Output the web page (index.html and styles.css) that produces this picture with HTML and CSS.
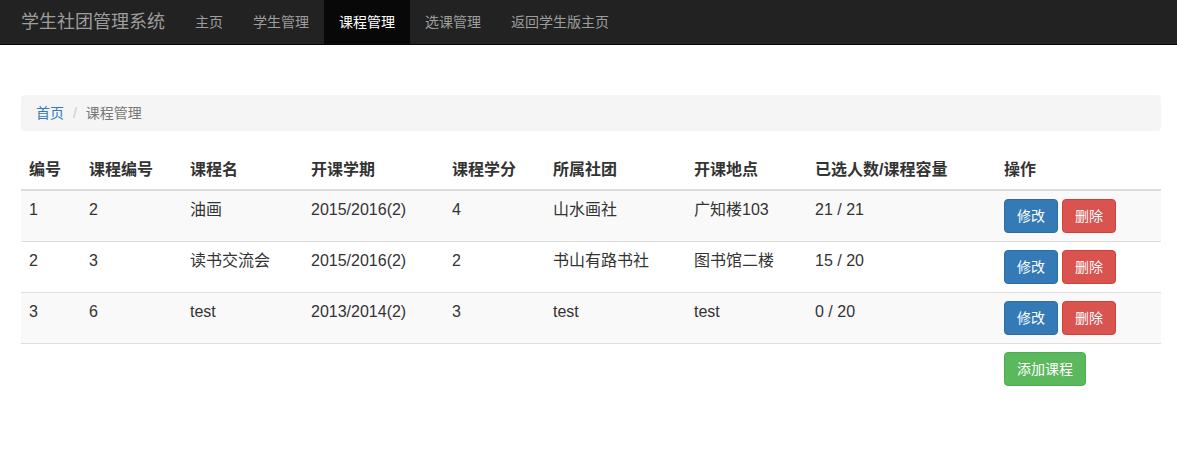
FILE: index.html
```html
<!DOCTYPE html>
<html lang="zh-CN">
<head>
    <meta charset="UTF-8">
    <meta name="viewport" content="width=device-width, initial-scale=1.0">
    <title>课程管理</title>
    <link rel="stylesheet" href="styles.css">
</head>
<body>
    <!-- 顶部导航 -->
    <nav class="navbar">
        <a href="#" class="brand">学生社团管理系统</a>
        <ul class="nav">
            <li><a href="#">主页</a></li>
            <li><a href="#">学生管理</a></li>
            <li class="active"><a href="#">课程管理</a></li>
            <li><a href="#">选课管理</a></li>
            <li><a href="#">返回学生版主页</a></li>
        </ul>
    </nav>

    <div class="container">
        <!-- 面包屑 -->
        <ol class="breadcrumb">
            <li><a href="#">首页</a></li>
            <li class="current">课程管理</li>
        </ol>

        <!-- 课程列表 -->
        <table class="table">
            <thead>
                <tr>
                    <th class="c1">编号</th>
                    <th class="c2">课程编号</th>
                    <th class="c3">课程名</th>
                    <th class="c4">开课学期</th>
                    <th class="c5">课程学分</th>
                    <th class="c6">所属社团</th>
                    <th class="c7">开课地点</th>
                    <th class="c8">已选人数/课程容量</th>
                    <th>操作</th>
                </tr>
            </thead>
            <tbody>
                <tr>
                    <td>1</td>
                    <td>2</td>
                    <td>油画</td>
                    <td>2015/2016(2)</td>
                    <td>4</td>
                    <td>山水画社</td>
                    <td>广知楼103</td>
                    <td>21 / 21</td>
                    <td><div class="ops"><a href="#" class="btn btn-primary">修改</a><a href="#" class="btn btn-danger">删除</a></div></td>
                </tr>
                <tr>
                    <td>2</td>
                    <td>3</td>
                    <td>读书交流会</td>
                    <td>2015/2016(2)</td>
                    <td>2</td>
                    <td>书山有路书社</td>
                    <td>图书馆二楼</td>
                    <td>15 / 20</td>
                    <td><div class="ops"><a href="#" class="btn btn-primary">修改</a><a href="#" class="btn btn-danger">删除</a></div></td>
                </tr>
                <tr>
                    <td>3</td>
                    <td>6</td>
                    <td>test</td>
                    <td>2013/2014(2)</td>
                    <td>3</td>
                    <td>test</td>
                    <td>test</td>
                    <td>0 / 20</td>
                    <td><div class="ops"><a href="#" class="btn btn-primary">修改</a><a href="#" class="btn btn-danger">删除</a></div></td>
                </tr>
                <tr class="add-row">
                    <td></td><td></td><td></td><td></td><td></td><td></td><td></td><td></td>
                    <td><a href="#" class="btn btn-success">添加课程</a></td>
                </tr>
            </tbody>
        </table>
    </div>
</body>
</html>
```

FILE: styles.css
```css
*{
    margin: 0;
    padding: 0;
    box-sizing: border-box;
}
body{
    font-family: "Liberation Sans", "Noto Sans CJK SC", sans-serif;
    font-size: 14px;
    line-height: 20px;
    color: #333;
    background: #fff;
}
a{
    text-decoration: none;
}
.navbar{
    display: flex;
    height: 45px;
    background-color: #222;
    border-bottom: 1px solid #080808;
}
.brand{
    padding: 0 15px 0 21px;
    font-size: 18px;
    line-height: 44px;
    color: #9d9d9d;
}
.nav{
    list-style: none;
    display: flex;
}
.nav a{
    display: block;
    padding: 12px 15px;
    color: #9d9d9d;
}
.nav .active a{
    color: #fff;
    background-color: #080808;
}
.container{
    margin-top: 50px;
    padding: 0 16px 0 21px;
}
.breadcrumb{
    list-style: none;
    display: flex;
    padding: 8px 15px;
    margin-bottom: 20px;
    background-color: #f5f5f5;
    border-radius: 4px;
}
.breadcrumb a{
    color: #337ab7;
}
.breadcrumb .current{
    color: #777;
}
.breadcrumb .current::before{
    content: "/\00a0";
    padding: 0 5px;
    margin-left: 4px;
    color: #ccc;
}
.table{
    width: 100%;
    border-collapse: collapse;
    border-spacing: 0;
    font-size: 16px;
    line-height: 22px;
}
.table th,.table td{
    padding: 8px;
    text-align: left;
    vertical-align: top;
    border-top: 1px solid #ddd;
}
.table th{
    border-top: 0;
    border-bottom: 2px solid #ddd;
    font-weight: bold;
    vertical-align: bottom;
}
.table tbody tr:nth-child(odd){
    background-color: #f9f9f9;
}
.table tbody tr.add-row{
    background-color: #fff;
}
.c1{ width: 60px; }
.c2{ width: 101px; }
.c3{ width: 121px; }
.c4{ width: 141px; }
.c5{ width: 101px; }
.c6{ width: 141px; }
.c7{ width: 121px; }
.c8{ width: 189px; }
.ops{
    display: flex;
    gap: 4px;
}
.btn{
    display: inline-block;
    padding: 6px 12px;
    font-size: 14px;
    line-height: 20px;
    color: #fff;
    border: 1px solid transparent;
    border-radius: 4px;
}
.btn-primary{
    background-color: #337ab7;
    border-color: #2e6da4;
}
.btn-danger{
    background-color: #d9534f;
    border-color: #d43f3a;
}
.btn-success{
    background-color: #5cb85c;
    border-color: #4cae4c;
}
```
